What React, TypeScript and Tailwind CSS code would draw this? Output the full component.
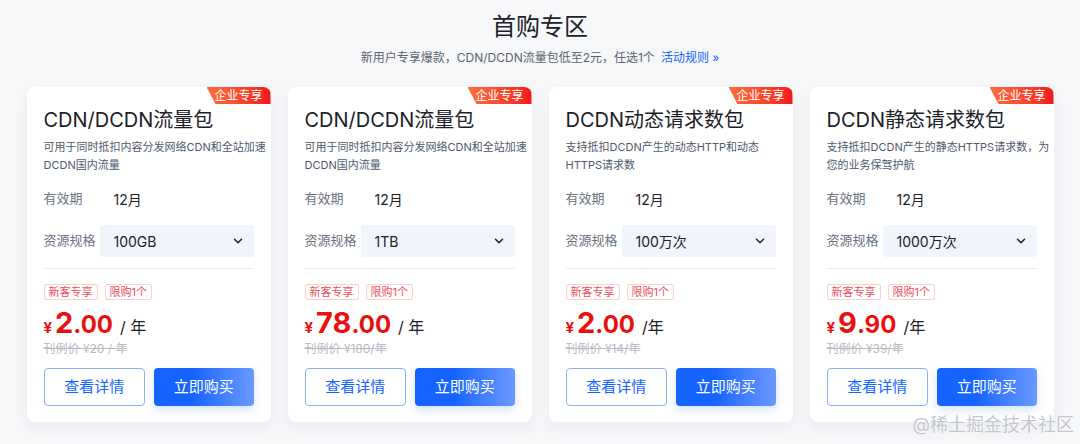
import React from 'react';
import { ChevronDown } from 'lucide-react';

interface Pkg {
  title: string;
  desc: [string, string];
  spec: string;
  priceInt: string;
  priceDec: string;
  unit: string;
  listPrice: string;
}

const packages: Pkg[] = [
  {
    title: 'CDN/DCDN流量包',
    desc: ['可用于同时抵扣内容分发网络CDN和全站加速', 'DCDN国内流量'],
    spec: '100GB',
    priceInt: '2',
    priceDec: '.00',
    unit: '/ 年',
    listPrice: '刊例价 ¥20 / 年',
  },
  {
    title: 'CDN/DCDN流量包',
    desc: ['可用于同时抵扣内容分发网络CDN和全站加速', 'DCDN国内流量'],
    spec: '1TB',
    priceInt: '78',
    priceDec: '.00',
    unit: '/ 年',
    listPrice: '刊例价 ¥180/年',
  },
  {
    title: 'DCDN动态请求数包',
    desc: ['支持抵扣DCDN产生的动态HTTP和动态', 'HTTPS请求数'],
    spec: '100万次',
    priceInt: '2',
    priceDec: '.00',
    unit: '/年',
    listPrice: '刊例价 ¥14/年',
  },
  {
    title: 'DCDN静态请求数包',
    desc: ['支持抵扣DCDN产生的静态HTTPS请求数，为', '您的业务保驾护航'],
    spec: '1000万次',
    priceInt: '9',
    priceDec: '.90',
    unit: '/年',
    listPrice: '刊例价 ¥39/年',
  },
];

const PackageCard: React.FC<{ pkg: Pkg }> = ({ pkg }) => (
  <div className="relative w-[244px] rounded-lg bg-white px-[17px] pt-[19px] pb-[16px] shadow-[0_6px_16px_rgba(30,40,70,0.05)]">
    {/* Badge */}
    <div className="absolute top-0 right-0 flex h-[17px] w-[64px] items-center justify-end rounded-tr-lg bg-gradient-to-r from-[#ff6b3d] to-[#f2141c] pr-[8px] text-[12px] leading-none text-white [clip-path:polygon(0_0,100%_0,100%_100%,9px_100%)]">
      企业专享
    </div>

    {/* Title */}
    <div className="text-[20px] leading-[28px] text-[#1d2129]">{pkg.title}</div>
    <div className="mt-[4px] whitespace-nowrap text-[11px] leading-[18px] text-[#4e5969]">
      <div>{pkg.desc[0]}</div>
      <div>{pkg.desc[1]}</div>
    </div>

    {/* Validity */}
    <div className="mt-[15px] flex h-[20px] items-center">
      <span className="w-[70px] text-[13px] text-[#6b7280]">有效期</span>
      <span className="text-[14px] text-[#1d2129]">12月</span>
    </div>

    {/* Spec select */}
    <div className="mt-[16px] flex items-center">
      <span className="w-[56px] text-[13px] text-[#6b7280]">资源规格</span>
      <div className="flex h-[32px] flex-1 items-center justify-between rounded-[3px] bg-[#f1f4fa] pl-[14px] pr-[9px]">
        <span className="text-[14px] text-[#1d2129]">{pkg.spec}</span>
        <ChevronDown size={14} strokeWidth={2.6} className="text-[#1d2129]" />
      </div>
    </div>

    <div className="mt-[11px] h-px bg-[#e8ebf0]" />

    {/* Tags */}
    <div className="mt-[15px] flex gap-[7px]">
      <span className="flex h-[16px] items-center rounded-[2px] border border-[#fcd0d0] px-[4px] text-[11px] text-[#e8505b]">
        新客专享
      </span>
      <span className="flex h-[16px] items-center rounded-[2px] border border-[#fcd0d0] px-[4px] text-[11px] text-[#e8505b]">
        限购1个
      </span>
    </div>

    {/* Price */}
    <div className="mt-[8px] flex h-[32px] items-baseline text-[#e8110f]">
      <span className="mr-[3px] text-[15px] font-bold">¥</span>
      <span className="text-[29px] font-bold leading-none">{pkg.priceInt}</span>
      <span className="text-[24px] font-bold leading-none">{pkg.priceDec}</span>
      <span className="ml-[7px] text-[16px] text-[#1d2129]">{pkg.unit}</span>
    </div>
    <div className="text-[12px] leading-[18px] text-[#b5bac3] line-through">{pkg.listPrice}</div>

    {/* Actions */}
    <div className="mt-[10px] flex gap-[9px]">
      <button className="h-[38px] flex-1 rounded-[4px] border border-[#8eaef5] bg-white text-[15px] text-[#1664ff]">
        查看详情
      </button>
      <button className="h-[38px] flex-1 rounded-[4px] bg-gradient-to-r from-[#1664ff] from-40% to-[#6a98ff] text-[15px] text-white shadow-[0_4px_10px_rgba(22,100,255,0.18)]">
        立即购买
      </button>
    </div>
  </div>
);

export default function App() {
  return (
    <div className="relative h-[444px] w-full overflow-hidden bg-[#f6f7f9] font-['Inter','Noto_Sans_CJK_SC',sans-serif]">
      <div className="flex flex-col items-center pt-[11px]">
        <h1 className="text-[24px] leading-[32px] text-[#1d2129]">首购专区</h1>
        <p className="mt-[6px] text-[12px] leading-[18px] text-[#5c6370]">
          新用户专享爆款，CDN/DCDN流量包低至2元，任选1个
          <a className="ml-[6px] text-[#1664ff]">活动规则 »</a>
        </p>
        <div className="mt-[20px] flex gap-[17px]">
          {packages.map((p, i) => (
            <PackageCard key={i} pkg={p} />
          ))}
        </div>
      </div>

      {/* Watermark */}
      <div className="absolute right-[6px] bottom-[6px] text-[18px] leading-[26px] text-[#c4c7cc] [text-shadow:0_0_2px_rgba(255,255,255,0.9)]">
        @稀土掘金技术社区
      </div>
    </div>
  );
}
